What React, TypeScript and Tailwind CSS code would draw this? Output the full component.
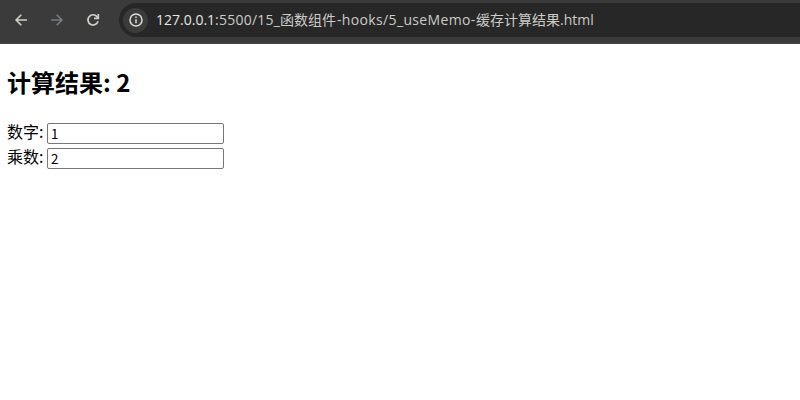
import { useState } from 'react';

function Toolbar() {
  return (
    <header className="flex h-[44px] items-start border-b border-[#484345] bg-[#3b3b3b]">
      <nav className="flex h-10 items-center gap-5 pl-[13px]">
        <button aria-label="Back" className="text-[#d2cec5]">
          <svg width="16" height="16" viewBox="0 0 16 16" fill="none" stroke="currentColor" strokeWidth="1.6">
            <path d="M14 8H3.4M8.3 2.8 3.1 8l5.2 5.2" />
          </svg>
        </button>
        <button aria-label="Forward" className="text-[#747c83]">
          <svg width="16" height="16" viewBox="0 0 16 16" fill="none" stroke="currentColor" strokeWidth="1.6">
            <path d="M2 8h10.6M7.7 2.8 12.9 8l-5.2 5.2" />
          </svg>
        </button>
        <button aria-label="Reload" className="text-[#d0d0cb]">
          <svg width="16" height="16" viewBox="0 0 16 16" fill="none" stroke="currentColor" strokeWidth="1.7">
            <path d="M13 9.2A5.1 5.1 0 1 1 12 4.6L13.2 6" />
            <path d="M13.3 2v4.4H9" />
          </svg>
        </button>
      </nav>
      <div className="mt-[3px] ml-[18px] flex h-[34px] flex-1 items-center rounded-l-full bg-[#272727] pl-1">
        <span className="flex size-[25px] items-center justify-center rounded-full bg-[#3b3b3b] text-[#deded6]">
          <svg width="14" height="14" viewBox="0 0 14 14" fill="none" stroke="currentColor" strokeWidth="1.5">
            <circle cx="7" cy="7" r="6" />
            <path d="M7 6.2v4M7 3.6v1.5" />
          </svg>
        </span>
        <div className="ml-2 flex whitespace-nowrap font-['Open_Sans','Noto_Sans_CJK_SC',sans-serif] text-sm leading-5 text-[#cbcbc7]">
          <span className="w-[59px] text-[#e6e6e3]">127.0.0.1</span>
          <span className="w-[65px] tracking-[0.25px]">:5500/15_</span>
          <span className="w-[57px]">函数组件</span>
          <span className="w-[139px] tracking-[0.35px]">-hooks/5_useMemo-</span>
          <span className="w-[84px]">缓存计算结果</span>
          <span>.html</span>
        </div>
      </div>
    </header>
  );
}

function Field({ label, value, onChange }: { label: string; value: number; onChange: (value: number) => void }) {
  return (
    <label className="flex h-[25px] items-start text-base">
      <span className="w-10 leading-[23px]">{label}:</span>
      <input
        type="number"
        value={value}
        onChange={(event) => onChange(Number(event.target.value))}
        className="mt-[3px] h-[21px] w-[177px] rounded-[2px] border border-[#767676] bg-white px-[3px] text-[13.333px] leading-none"
      />
    </label>
  );
}

export default function App() {
  const [number, setNumber] = useState(1);
  const [multiplier, setMultiplier] = useState(2);

  return (
    <div className="min-h-screen bg-white font-['Noto_Sans_CJK_SC',sans-serif] text-black">
      <Toolbar />
      <main className="px-[7px] pt-5">
        <h2 className="mb-[21px] h-[35px] text-2xl leading-[35px] font-bold">计算结果: {number * multiplier}</h2>
        <Field label="数字" value={number} onChange={setNumber} />
        <Field label="乘数" value={multiplier} onChange={setMultiplier} />
      </main>
    </div>
  );
}
